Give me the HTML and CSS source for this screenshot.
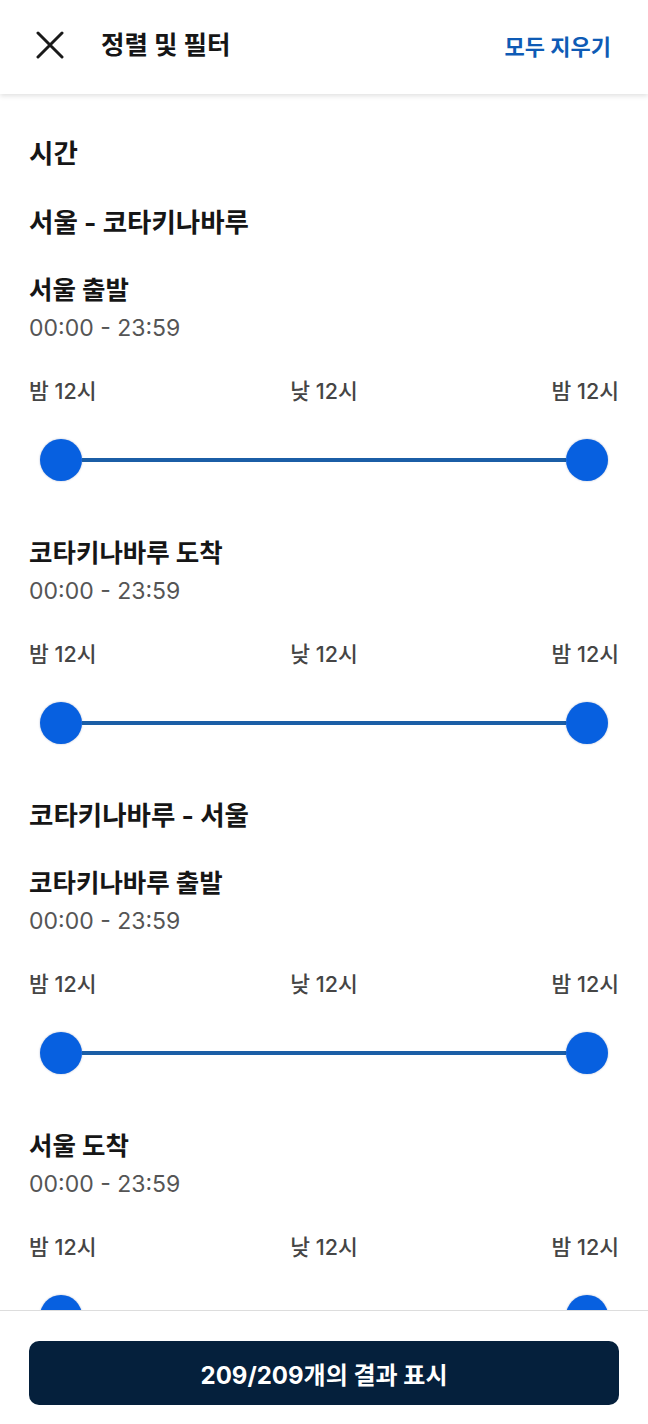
FILE: index.html
```html
<!DOCTYPE html>
<html lang="ko">
<head>
    <meta charset="UTF-8">
    <meta name="viewport" content="width=device-width, initial-scale=1.0">
    <title>정렬 및 필터</title>
    <link rel="stylesheet" href="styles.css">
</head>
<body>
    <div class="page">
        <header class="top-bar">
            <button class="close-btn" aria-label="닫기">
                <svg width="28" height="28" viewBox="0 0 28 28">
                    <path d="M2 2 L26 26 M26 2 L2 26" stroke="#1a1a1a" stroke-width="3" stroke-linecap="round" fill="none"/>
                </svg>
            </button>
            <h1 class="page-title">정렬 및 필터</h1>
            <a class="clear-all" href="#">모두 지우기</a>
        </header>

        <main class="content">
            <h2 class="group-title first">시간</h2>

            <h2 class="group-title">서울 - 코타키나바루</h2>

            <div class="filter">
                <div class="filter-name">서울 출발</div>
                <div class="filter-range">00:00 - 23:59</div>
                <div class="scale">
                    <span>밤 12시</span>
                    <span>낮 12시</span>
                    <span>밤 12시</span>
                </div>
                <div class="slider">
                    <span class="thumb"></span>
                    <span class="track"></span>
                    <span class="thumb"></span>
                </div>
            </div>

            <div class="filter">
                <div class="filter-name">코타키나바루 도착</div>
                <div class="filter-range">00:00 - 23:59</div>
                <div class="scale">
                    <span>밤 12시</span>
                    <span>낮 12시</span>
                    <span>밤 12시</span>
                </div>
                <div class="slider">
                    <span class="thumb"></span>
                    <span class="track"></span>
                    <span class="thumb"></span>
                </div>
            </div>

            <h2 class="group-title">코타키나바루 - 서울</h2>

            <div class="filter">
                <div class="filter-name">코타키나바루 출발</div>
                <div class="filter-range">00:00 - 23:59</div>
                <div class="scale">
                    <span>밤 12시</span>
                    <span>낮 12시</span>
                    <span>밤 12시</span>
                </div>
                <div class="slider">
                    <span class="thumb"></span>
                    <span class="track"></span>
                    <span class="thumb"></span>
                </div>
            </div>

            <div class="filter">
                <div class="filter-name">서울 도착</div>
                <div class="filter-range">00:00 - 23:59</div>
                <div class="scale">
                    <span>밤 12시</span>
                    <span>낮 12시</span>
                    <span>밤 12시</span>
                </div>
                <div class="slider">
                    <span class="thumb"></span>
                    <span class="track"></span>
                    <span class="thumb"></span>
                </div>
            </div>
        </main>

        <footer class="bottom-bar">
            <button class="show-results">209/209개의 결과 표시</button>
        </footer>
    </div>
</body>
</html>
```

FILE: styles.css
```css
* {
    box-sizing: border-box;
}

body {
    margin: 0;
    background: #fff;
    color: #161616;
    font-family: Inter, "Noto Sans CJK KR", sans-serif;
}

.page {
    display: flex;
    flex-direction: column;
    height: 100vh;
    overflow: hidden;
}

/* header */
.top-bar {
    position: relative;
    z-index: 2;
    display: flex;
    align-items: center;
    height: 94px;
    padding: 0 37px 0 36px;
    background: #fff;
    box-shadow: 0 2px 5px rgba(0,0,0,0.12);
    flex-shrink: 0;
}

.close-btn {
    display: flex;
    padding: 0;
    border: none;
    background: none;
    cursor: pointer;
    margin-top: -4px;
}

.page-title {
    margin: -4px 0 0 37px;
    font-size: 25.5px;
    font-weight: 700;
    line-height: 36px;
    color: #161616;
}

.clear-all {
    margin: -4px 0 0 auto;
    font-size: 22px;
    font-weight: 700;
    color: #0e5bb5;
    text-decoration: none;
}

/* content */
.content {
    flex: 1;
    overflow: hidden;
    padding: 0 29px;
}

.group-title {
    margin: 50px 0 0;
    font-size: 26.5px;
    font-weight: 700;
    line-height: 40px;
}

.group-title.first {
    margin-top: 39px;
}

.group-title.first + .group-title {
    margin-top: 29px;
}

.group-title + .filter {
    margin-top: 30px;
}

.filter {
    margin-top: 53px;
}

.filter-name {
    font-size: 25.5px;
    font-weight: 700;
    line-height: 36px;
}

.filter-range {
    font-size: 23px;
    color: #555;
    line-height: 40px;
}

.scale {
    display: flex;
    justify-content: space-between;
    margin-top: 27px;
    font-size: 21.5px;
    font-weight: 500;
    line-height: 32px;
    color: #454545;
}

.slider {
    display: flex;
    align-items: center;
    height: 44px;
    margin-top: 31px;
    padding: 0 11px;
}

.thumb {
    width: 42px;
    height: 42px;
    border-radius: 50%;
    background: #0760e0;
    box-shadow: 0 0 2px rgba(0,40,120,0.35);
    flex-shrink: 0;
}

.track {
    flex: 1;
    height: 4px;
    background: #1b5ea6;
}

/* footer */
.bottom-bar {
    flex-shrink: 0;
    height: 114px;
    padding: 30px 29px 0;
    border-top: 1px solid #ddd;
    background: #fff;
}

.show-results {
    display: block;
    width: 100%;
    height: 64px;
    border: none;
    border-radius: 10px;
    background: #05203c;
    color: #fff;
    font-family: inherit;
    font-size: 24px;
    font-weight: 700;
    cursor: pointer;
}
```
